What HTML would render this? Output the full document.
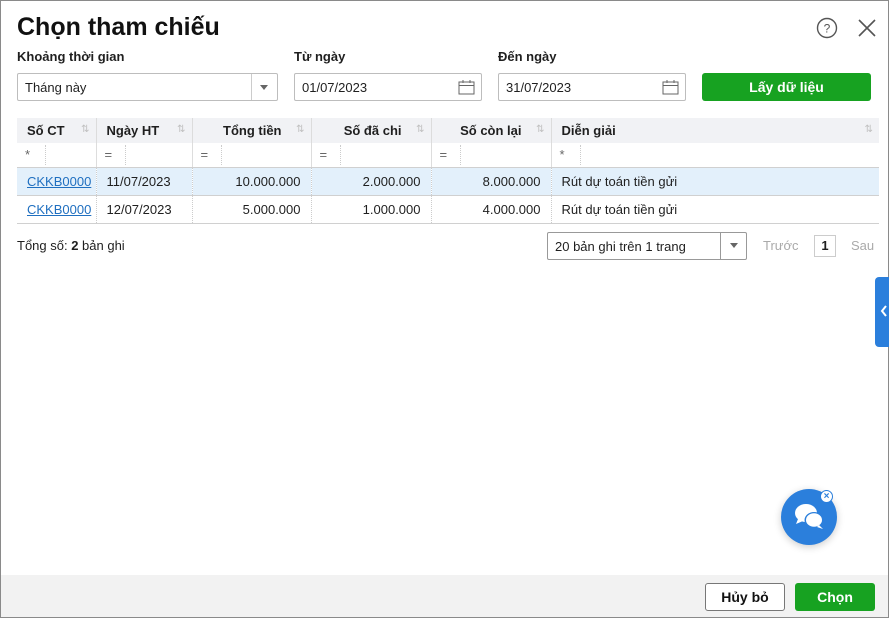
<!DOCTYPE html>
<html><head><meta charset="utf-8"><style>
*{box-sizing:border-box;margin:0;padding:0}
body{width:889px;height:618px;overflow:hidden;background:#fff;font-family:"Liberation Sans","DejaVu Sans",sans-serif;color:#1f1f1f;font-size:13px;position:relative}
.frame{position:absolute;left:0;top:0;width:889px;height:618px;border:1px solid #8a8a8a}
.abs{position:absolute}
h1{position:absolute;left:17px;top:13px;font-size:25px;font-weight:bold;color:#111}
.lbl{position:absolute;top:49px;font-weight:bold;font-size:13px}
.inp{position:absolute;top:73px;height:28px;border:1px solid #bdbdbd;border-radius:2px;padding:6px 7px;font-size:13px}
.btn{position:absolute;border-radius:3px;font-weight:bold;font-size:14px;text-align:center}
table{position:absolute;left:17px;top:118px;width:862px;border-collapse:collapse;font-size:13px;table-layout:fixed}
td,th{height:25px;padding:0 10px;white-space:nowrap;overflow:hidden}
th{background:#f1f2f5;text-align:left;font-weight:bold;border-left:1px solid #dcdcdc;position:relative}
th:first-child{border-left:none}
th .s{position:absolute;right:6px;top:6px;color:#c0c0c0;font-size:10px;font-weight:normal}
tr.f td{height:24px;border-left:1px solid #ddd;border-bottom:1px solid #d0d0d0;color:#666;padding:0 8px;position:relative}
tr.f td:first-child{border-left:none}
tr.f td i{position:absolute;left:28px;top:2px;bottom:2px;border-left:1px dotted #ccc}
tr.r td{height:28px;border-left:1px dotted #ccc;border-bottom:1px solid #d0d0d0}
tr.r td:first-child{border-left:none}
.sel td{background:#e3f0fb}
.num{text-align:right}
a{color:#1f6fc0;text-decoration:underline}
</style></head><body>
<div class="frame"></div>
<h1>Chọn tham chiếu</h1>
<svg class="abs" style="left:816px;top:17px" width="22" height="22" viewBox="0 0 22 22"><circle cx="11" cy="11" r="9.5" fill="none" stroke="#555" stroke-width="1.4"/><text x="11" y="15.5" text-anchor="middle" font-size="12" fill="#555" font-family="Liberation Sans">?</text></svg>
<svg class="abs" style="left:857px;top:18px" width="20" height="20" viewBox="0 0 20 20"><path d="M2 2L18 18M18 2L2 18" stroke="#555" stroke-width="1.6"/></svg>
<div class="lbl" style="left:17px">Khoảng thời gian</div>
<div class="lbl" style="left:294px">Từ ngày</div>
<div class="lbl" style="left:498px">Đến ngày</div>
<div class="inp" style="left:17px;width:261px">Tháng này</div>
<div class="abs" style="left:251px;top:74px;width:1px;height:26px;background:#ccc"></div>
<div class="abs" style="left:260px;top:85px;border:4px solid transparent;border-top:5px solid #666"></div>
<div class="inp" style="left:294px;width:188px">01/07/2023</div>
<div class="inp" style="left:498px;width:188px">31/07/2023</div>
<svg class="abs" style="left:458px;top:79px" width="17" height="16" viewBox="0 0 17 16"><rect x="1" y="3" width="15" height="12" fill="none" stroke="#666"/><path d="M1 6.5H16M5 1V4M12 1V4" stroke="#666"/></svg>
<svg class="abs" style="left:662px;top:79px" width="17" height="16" viewBox="0 0 17 16"><rect x="1" y="3" width="15" height="12" fill="none" stroke="#666"/><path d="M1 6.5H16M5 1V4M12 1V4" stroke="#666"/></svg>
<div class="btn" style="left:702px;top:73px;width:169px;height:28px;line-height:28px;background:#17a221;color:#fff">Lấy dữ liệu</div>
<table>
<colgroup><col style="width:79px"><col style="width:96px"><col style="width:119px"><col style="width:120px"><col style="width:120px"><col style="width:328px"></colgroup>
<tr><th>Số CT<span class="s">⇅</span></th><th>Ngày HT<span class="s">⇅</span></th><th style="text-align:right;padding-right:29px">Tổng tiền<span class="s">⇅</span></th><th style="text-align:right;padding-right:29px">Số đã chi<span class="s">⇅</span></th><th style="text-align:right;padding-right:29px">Số còn lại<span class="s">⇅</span></th><th>Diễn giải<span class="s">⇅</span></th></tr>
<tr class="f"><td>*<i></i></td><td>=<i></i></td><td>=<i></i></td><td>=<i></i></td><td>=<i></i></td><td>*<i></i></td></tr>
<tr class="r sel"><td style="padding-right:2px"><a>CKKB0000</a></td><td>11/07/2023</td><td class="num">10.000.000</td><td class="num">2.000.000</td><td class="num">8.000.000</td><td>Rút dự toán tiền gửi</td></tr>
<tr class="r"><td style="padding-right:2px"><a>CKKB0000</a></td><td>12/07/2023</td><td class="num">5.000.000</td><td class="num">1.000.000</td><td class="num">4.000.000</td><td>Rút dự toán tiền gửi</td></tr>
</table>
<div class="abs" style="left:17px;top:238px">Tổng số: <b>2</b> bản ghi</div>
<div class="abs" style="left:547px;top:232px;width:200px;height:28px;border:1px solid #999;border-radius:2px;padding:6px 7px">20 bản ghi trên 1 trang</div>
<div class="abs" style="left:720px;top:233px;width:1px;height:26px;background:#999"></div>
<div class="abs" style="left:730px;top:243px;border:4px solid transparent;border-top:5px solid #666"></div>
<div class="abs" style="left:763px;top:238px;color:#aaa">Trước</div>
<div class="abs" style="left:814px;top:235px;width:22px;height:22px;border:1px solid #ccc;text-align:center;line-height:20px;font-weight:bold">1</div>
<div class="abs" style="left:851px;top:238px;color:#aaa">Sau</div>
<div class="abs" style="left:875px;top:277px;width:14px;height:70px;background:#2b7fdc;border-radius:4px 0 0 4px"></div>
<svg class="abs" style="left:880px;top:305px" width="8" height="12" viewBox="0 0 8 12"><path d="M6 1L2 6L6 11" stroke="#fff" stroke-width="2" fill="none"/></svg>
<div class="abs" style="left:781px;top:489px;width:56px;height:56px;border-radius:50%;background:#2b7fdc;box-shadow:0 2px 8px rgba(0,0,0,.2)"></div>
<svg class="abs" style="left:792px;top:502px" width="36" height="30" viewBox="0 0 36 30"><ellipse cx="14" cy="11" rx="11" ry="9" fill="#fff"/><path d="M6 17L4 22L11 19Z" fill="#fff"/><ellipse cx="22" cy="18" rx="9.5" ry="8" fill="#2b7fdc"/><ellipse cx="22" cy="18" rx="8" ry="6.8" fill="#fff"/><path d="M27 23L31 27L25 25Z" fill="#fff"/></svg>
<div class="abs" style="left:820px;top:490px;width:13px;height:13px;border-radius:50%;background:#fff;border:1px solid #2b7fdc;color:#2b7fdc;font-size:10px;line-height:11px;text-align:center;font-weight:bold">×</div>
<div class="abs" style="left:1px;top:575px;width:887px;height:42px;background:#f2f2f2"></div>
<div class="btn" style="left:705px;top:583px;width:80px;height:28px;line-height:26px;border:1px solid #777;background:#fff;color:#111">Hủy bỏ</div>
<div class="btn" style="left:795px;top:583px;width:80px;height:28px;line-height:28px;background:#17a221;color:#fff">Chọn</div>
</body></html>
